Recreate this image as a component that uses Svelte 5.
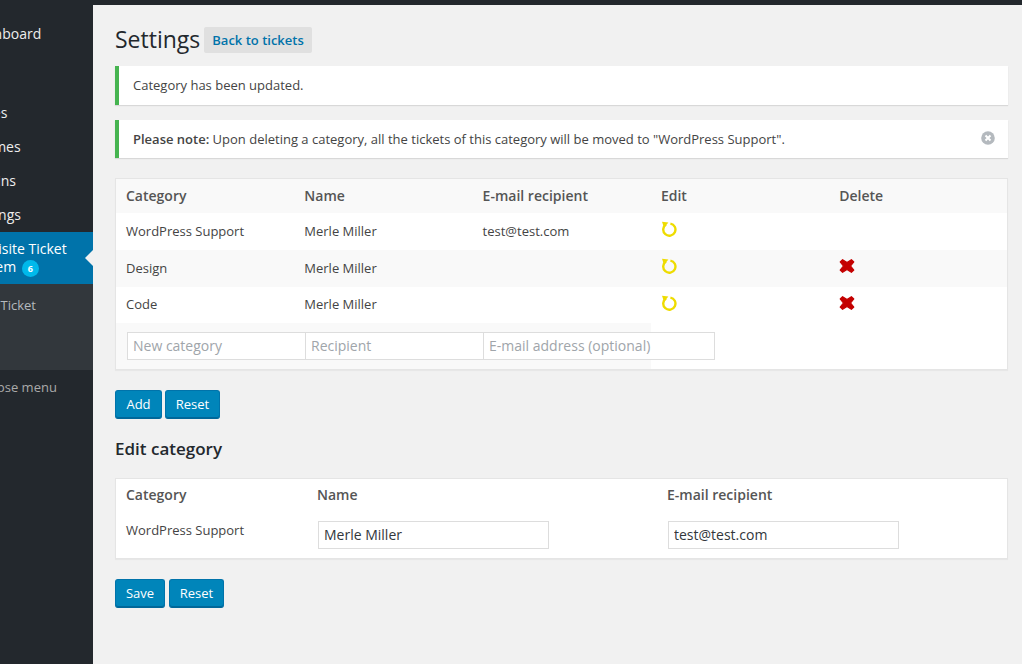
<script>
  const menuTop = ['Pages', 'Themes', 'Plugins', 'Settings'];
  const rows = [
    { cat: 'WordPress Support', name: 'Merle Miller', mail: 'test@test.com', del: false },
    { cat: 'Design', name: 'Merle Miller', mail: '', del: true },
    { cat: 'Code', name: 'Merle Miller', mail: '', del: true }
  ];
</script>

{#snippet reload()}
  <svg class="glyph" width="16" height="16" viewBox="0 0 16 16" aria-hidden="true">
    <path d="M5 3.5A6.1 6.1 0 1 0 9.4 2.6" fill="none" stroke="#eedc00" stroke-width="2.4" />
    <path d="M1 .8 L7.4 1.4 L3 6.8 Z" fill="#eedc00" />
  </svg>
{/snippet}

{#snippet cross()}
  <svg class="glyph" width="16" height="16" viewBox="0 0 16 16" aria-hidden="true">
    <path d="M1.2 4 3.6 1.7 8 4.6 12.4 1.7 14.8 4 11.6 8 14.8 12 12.4 14.3 8 11.4 3.6 14.3 1.2 12 4.4 8Z" fill="#c40000" stroke="#c40000" stroke-width="1.2" stroke-linejoin="round" />
  </svg>
{/snippet}

<div class="page">
  <div class="topbar"></div>
  <div class="body">
    <aside class="side">
      <div class="side-inner">
        <div class="mi dash">Dashboard</div>
        <div class="gap"></div>
        {#each menuTop as m}
          <div class="mi">{m}</div>
        {/each}
        <div class="active">
          <div class="l1">Exquisite Ticket</div>
          <div>System <span class="badge">6</span></div>
        </div>
        <div class="sub"><div>New Ticket</div></div>
        <div class="collapse">Collapse menu</div>
      </div>
    </aside>

    <main class="main">
      <div class="title">
        <h1>Settings</h1>
        <span class="back">Back to tickets</span>
      </div>

      <div class="notice first">Category has been updated.</div>
      <div class="notice second">
        <span><strong>Please note:</strong> Upon deleting a category, all the tickets of this category will be moved to "WordPress Support".</span>
        <svg class="close" width="14" height="14" viewBox="0 0 14 14" aria-hidden="true">
          <circle cx="7" cy="7" r="6.8" fill="#b4b9be" />
          <path d="M4.5 4.5l5 5M9.5 4.5l-5 5" stroke="#fff" stroke-width="2" />
        </svg>
      </div>

      <section class="card list">
        <div class="row head">
          <div>Category</div><div>Name</div><div>E-mail recipient</div><div>Edit</div><div>Delete</div>
        </div>
        {#each rows as r, i}
          <div class="row item" class:alt={i === 1} class:short={i === 2}>
            <div>{r.cat}</div>
            <div>{r.name}</div>
            <div>{r.mail}</div>
            <div class="ic">{@render reload()}</div>
            <div class="ic">{#if r.del}{@render cross()}{/if}</div>
          </div>
        {/each}
        <div class="addrow">
          <div class="addfill">
            <input class="f1" placeholder="New category" />
            <input class="f2" placeholder="Recipient" />
            <input class="f3" placeholder="E-mail address (optional)" />
          </div>
        </div>
      </section>

      <div class="btns one">
        <button class="b add">Add</button>
        <button class="b reset">Reset</button>
      </div>

      <h2>Edit category</h2>

      <section class="card edit">
        <div class="c1">
          <div class="lbl">Category</div>
          <div class="val">WordPress Support</div>
        </div>
        <div class="c2">
          <div class="lbl">Name</div>
          <input class="ein" value="Merle Miller" />
        </div>
        <div class="c3">
          <div class="lbl">E-mail recipient</div>
          <input class="ein" value="test@test.com" />
        </div>
      </section>

      <div class="btns two">
        <button class="b save">Save</button>
        <button class="b reset">Reset</button>
      </div>
    </main>
  </div>
</div>

<style>
  :global(body) {
    margin: 0;
    background: #f1f1f1;
  }
  .page {
    width: 1022px;
    height: 664px;
    overflow: hidden;
    font-family: "Open Sans", sans-serif;
    font-size: 13px;
    color: #444;
    background: #f1f1f1;
  }
  .topbar {
    height: 5px;
    background: #23282d;
  }
  .body {
    display: flex;
    height: 659px;
  }
  .side {
    width: 93px;
    flex: none;
    background: #23282d;
    overflow: hidden;
  }
  .side-inner {
    width: 160px;
    margin-left: -67px;
    color: #eee;
    font-size: 14px;
    line-height: 18px;
    white-space: nowrap;
  }
  .mi {
    height: 34px;
    padding-left: 36px;
    box-sizing: border-box;
    padding-top: 8px;
  }
  .dash {
    margin-top: 12px;
    height: 35px;
  }
  .gap {
    height: 44px;
  }
  .active {
    height: 52px;
    background: #0073aa;
    color: #fff;
    box-sizing: border-box;
    padding: 8px 0 0 36px;
    position: relative;
  }
  .l1 {
    margin-left: -3px;
  }
  .active::after {
    content: "";
    position: absolute;
    right: 0;
    top: 18px;
    border: 8px solid transparent;
    border-right-color: #f1f1f1;
  }
  .badge {
    display: inline-block;
    width: 17px;
    height: 17px;
    line-height: 17px;
    border-radius: 50%;
    background: #00b9eb;
    color: #fff;
    font-size: 9px;
    font-weight: 700;
    text-align: center;
    margin-left: 2px;
  }
  .sub {
    height: 86px;
    background: #32373c;
    color: #b4b9be;
    font-size: 13px;
    padding: 12px 0 0 37px;
    box-sizing: border-box;
  }
  .collapse {
    margin-top: 8px;
    padding-left: 34px;
    font-size: 13px;
    color: #aaa;
  }
  .main {
    flex: 1;
    min-width: 0;
    padding-left: 22px;
    padding-right: 14px;
  }
  .title {
    display: flex;
    align-items: center;
    height: 61px;
    box-sizing: border-box;
    padding-top: 6px;
    gap: 4px;
  }
  h1 {
    margin: 2px 0 0;
    font-size: 23px;
    font-weight: 400;
    line-height: 29px;
    color: #23282d;
  }
  .back {
    display: block;
    height: 26px;
    line-height: 26px;
    padding: 0 8px;
    background: #e0e0e0;
    border-radius: 2px;
    color: #0073aa;
    font-weight: 600;
    margin-top: 2px;
  }
  .notice {
    background: #fff;
    border-left: 4px solid #46b450;
    box-shadow: 0 1px 1px rgba(0, 0, 0, 0.1);
    box-sizing: border-box;
    padding-left: 14px;
    display: flex;
    align-items: center;
    justify-content: space-between;
  }
  .notice.first {
    height: 39px;
    padding-bottom: 2px;
  }
  .notice.second {
    height: 38px;
    margin-top: 15px;
    padding-right: 13px;
  }
  strong {
    font-weight: 600;
  }
  .close {
    margin-top: -2px;
  }
  .card {
    background: #fff;
    border: 1px solid #e5e5e5;
    box-shadow: 0 1px 1px rgba(0, 0, 0, 0.04);
    box-sizing: border-box;
  }
  .list {
    margin-top: 20px;
    height: 192px;
  }
  .row {
    display: grid;
    grid-template-columns: 178.3px 178.3px 178.3px 178.3px 1fr;
    padding: 0 0 2px 10px;
    align-items: center;
    box-sizing: border-box;
  }
  .head {
    height: 34px;
    background: #f9f9f9;
    font-size: 14px;
    font-weight: 600;
    color: #555;
  }
  .item {
    height: 37px;
  }
  .item.short {
    height: 36px;
  }
  .alt {
    background: #f9f9f9;
  }
  .ic {
    display: flex;
    align-items: center;
  }
  .glyph {
    margin-top: -4px;
  }
  .short .glyph {
    margin-top: -2px;
  }
  .addrow {
    height: 46px;
  }
  .addfill {
    width: 535px;
    height: 46px;
    background: #f9f9f9;
    display: flex;
    padding: 9px 0 0 11px;
    box-sizing: border-box;
  }
  input {
    font-family: inherit;
    font-size: 14px;
    color: #32373c;
    background: #fff;
    border: 1px solid #ddd;
    border-radius: 0;
    box-sizing: border-box;
    outline: none;
    flex: none;
    margin: 0;
    padding: 0 5px;
  }
  input::placeholder {
    color: #a0a5aa;
    opacity: 1;
  }
  .f1, .f2, .f3 {
    height: 28px;
    margin-right: -1px;
    padding-bottom: 2px;
  }
  .f1, .f2 {
    width: 179px;
  }
  .f3 {
    width: 232px;
  }
  .btns {
    display: flex;
    gap: 3px;
  }
  .btns.one {
    margin-top: 20px;
  }
  .btns.two {
    margin-top: 20px;
    gap: 4px;
  }
  .b {
    height: 29px;
    font-family: inherit;
    font-size: 13px;
    color: #fff;
    background: #0085ba;
    border: 1px solid #0073aa;
    border-bottom-color: #006799;
    box-shadow: inset 0 -1px 0 #006799;
    border-radius: 3px;
    margin: 0;
    padding: 0 0 2px;
  }
  .add {
    width: 47px;
  }
  .reset {
    width: 55px;
  }
  .save {
    width: 50px;
  }
  h2 {
    margin: 19px 0 0;
    font-size: 17px;
    line-height: 22px;
    font-weight: 600;
    color: #23282d;
  }
  .edit {
    margin-top: 18px;
    height: 81px;
    display: flex;
    padding-left: 10px;
  }
  .c1 {
    width: 191px;
  }
  .c2 {
    width: 350px;
  }
  .lbl {
    font-size: 14px;
    font-weight: 600;
    color: #555;
    line-height: 20px;
    padding-top: 6px;
  }
  .val {
    margin-top: 16px;
    line-height: 18px;
  }
  .ein {
    width: 231px;
    height: 28px;
    margin: 16px 0 0 1px;
    padding-bottom: 2px;
    display: block;
  }
</style>
